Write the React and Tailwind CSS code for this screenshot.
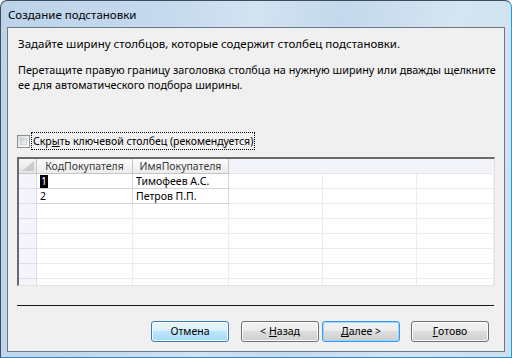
import React from "react";

const font = { fontFamily: '"Noto Sans", "Open Sans", sans-serif' };

function Btn({ children, variant }) {
  const base =
    "w-[78px] h-[21px] rounded-[3px] flex items-center justify-center text-[10.5px] text-black leading-none whitespace-nowrap";
  if (variant === "hot")
    return (
      <div className={`${base} border border-[#3c7fb1] bg-[linear-gradient(#eaf6fd_0%,#d9f0fc_50%,#bee6fd_50%,#a7d9f5_100%)] shadow-[inset_0_0_0_1px_#f4fbff]`}>
        {children}
      </div>
    );
  if (variant === "focus")
    return (
      <div className={`${base} border border-[#3399ff] bg-[linear-gradient(#f2f2f2_0%,#ebebeb_50%,#dddddd_50%,#cfcfcf_100%)] shadow-[inset_0_0_0_1px_#9fd6f7]`}>
        {children}
      </div>
    );
  return (
    <div className={`${base} border border-[#707070] bg-[linear-gradient(#f2f2f2_0%,#ebebeb_50%,#dddddd_50%,#cfcfcf_100%)] shadow-[inset_0_0_0_1px_#fcfcfc]`}>
      {children}
    </div>
  );
}

function Cell({ w, children, kind = "empty", last }) {
  const cls =
    kind === "data"
      ? "bg-white border-r border-b border-[#d4d4d4]"
      : kind === "sel"
      ? "bg-[#f4f4fd] border-r border-b border-[#dcdce6]"
      : "bg-white border-r border-b border-[#ececec]";
  return (
    <div
      className={`${cls} ${last ? "flex-1" : ""} h-[15px] shrink-0 flex items-center pl-[3px] text-[10.5px] leading-none overflow-hidden whitespace-nowrap`}
      style={last ? undefined : { width: w }}
    >
      {children}
    </div>
  );
}

function EmptyRow() {
  return (
    <div className="flex h-[15px] shrink-0">
      <Cell w={18} kind="sel" />
      <Cell w={96} />
      <Cell w={96} />
      <Cell w={94} />
      <Cell w={94} />
      <Cell last />
    </div>
  );
}

export default function App() {
  return (
    <div className="w-[512px] h-[358px] overflow-hidden bg-white" style={font}>
      <div className="w-[512px] h-[358px] rounded-t-[7px] border border-[#3e4c5b] border-r-[#1d9ddb] border-b-[#2c8ccc] bg-[linear-gradient(100deg,#bcd3ea_0%,#c6daee_30%,#d2e3f2_45%,#c4d9ec_60%,#d4e4f2_80%,#cde0f0_100%)] flex flex-col">
        <div className="h-[26px] shrink-0 flex items-center pl-[7px] text-[11.5px] text-black pt-[1px]">
          Создание подстановки
        </div>
        <div className="mx-[6px] h-[325px] border border-[#6b7886] bg-[#f0f0f0] flex flex-col text-black">
          <div className="pl-[10px] pt-[8px] leading-[15px] whitespace-nowrap">
            <p className="text-[11.5px]">Задайте ширину столбцов, которые содержит столбец подстановки.</p>
            <p className="mt-[11px] text-[10.8px]">
              Перетащите правую границу заголовка столбца на нужную ширину или дважды щелкните
              <br />
              ее для автоматического подбора ширины.
            </p>
          </div>
          <div className="mt-[40px] ml-[9px] flex items-center h-[18px]">
            <div className="w-[13px] h-[13px] border border-[#8e8f8f] bg-[linear-gradient(135deg,#dcdcdc,#ffffff)] p-[2px]">
              <div className="w-full h-full bg-[linear-gradient(135deg,#cbcfd5,#f6f6f6)] border border-[#c5d4e3]" />
            </div>
            <div className="ml-[1px] h-[18px] px-[1px] border border-dotted border-black flex items-center text-[10.5px] leading-none whitespace-nowrap">
              Скр<span className="underline">ы</span>ть ключевой столбец (рекомендуется)
            </div>
          </div>
          <div className="mt-[7px] ml-[9px] w-[478px] h-[129px] border-t-2 border-l-2 border-[#6a6a6a] border-r border-b border-r-[#e3e3e3] border-b-[#e3e3e3] bg-white flex flex-col overflow-hidden">
            <div className="flex h-[15px] shrink-0 text-[10.5px]">
              <div className="w-[18px] h-[15px] shrink-0 bg-[linear-gradient(#f6f6f6,#e4e4e4)] border-r border-b border-[#c5c5c5] flex items-end justify-end p-[2px]">
                <svg width="12" height="10" viewBox="0 0 12 10">
                  <polygon points="12,0 12,10 0,10" fill="#c9cbd3" />
                </svg>
              </div>
              <div className="w-[96px] h-[15px] shrink-0 bg-[linear-gradient(#fbfbfb,#ececec)] border-r border-b border-[#c5c5c5] flex items-center justify-center leading-none text-[#3a3a3a] whitespace-nowrap">
                КодПокупателя
              </div>
              <div className="w-[96px] h-[15px] shrink-0 bg-[linear-gradient(#fbfbfb,#ececec)] border-r border-b border-[#c5c5c5] flex items-center justify-center leading-none text-[#3a3a3a] whitespace-nowrap">
                ИмяПокупателя
              </div>
              <div className="flex-1 h-[15px] bg-[#f3f3fa] border-b border-[#e6e6ee]" />
            </div>
            <div className="flex h-[15px] shrink-0">
              <Cell w={18} kind="sel" />
              <Cell w={96} kind="data">
                <span className="bg-black text-white px-[1px] leading-[13px]">1</span>
              </Cell>
              <Cell w={96} kind="data">Тимофеев А.С.</Cell>
              <Cell w={94} />
              <Cell w={94} />
              <Cell last />
            </div>
            <div className="flex h-[15px] shrink-0">
              <Cell w={18} kind="sel" />
              <Cell w={96} kind="data">2</Cell>
              <Cell w={96} kind="data">Петров П.П.</Cell>
              <Cell w={94} />
              <Cell w={94} />
              <Cell last />
            </div>
            <EmptyRow />
            <EmptyRow />
            <EmptyRow />
            <EmptyRow />
            <EmptyRow />
            <EmptyRow />
          </div>
          <div className="mt-[19px] ml-[9px] w-[477px] h-[1px] bg-[#1a1a1a]" />
          <div className="mt-[15px] flex pl-[143px]">
            <Btn variant="hot">Отмена</Btn>
            <div className="ml-[12px]">
              <Btn>
                &lt; <span className="underline ml-[3px]">Н</span>азад
              </Btn>
            </div>
            <div className="ml-[3px]">
              <Btn variant="focus">
                <span className="underline">Д</span>алее &gt;
              </Btn>
            </div>
            <div className="ml-[11px]">
              <Btn>
                <span className="underline">Г</span>отово
              </Btn>
            </div>
          </div>
        </div>
      </div>
    </div>
  );
}
